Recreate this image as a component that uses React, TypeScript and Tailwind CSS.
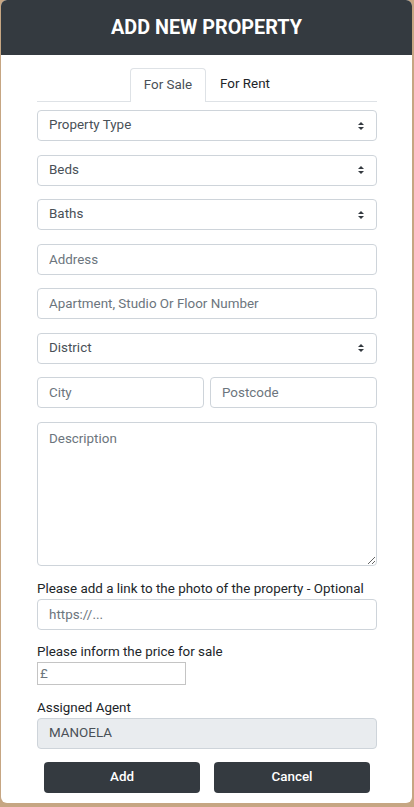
const Caret = () => (
  <svg width="8" height="10" viewBox="0 0 8 10" className="text-[#343a40]">
    <path d="M4 1 L7 4 H1 Z" fill="currentColor" />
    <path d="M4 9 L7 6 H1 Z" fill="currentColor" />
  </svg>
);

const SelectBox = ({ label }: { label: string }) => (
  <div className="flex items-center justify-between h-[31px] px-[11px] border border-[#ced4da] rounded-[4px] bg-white text-[13.4px] text-[#495057]">
    <span>{label}</span>
    <Caret />
  </div>
);

const TextBox = ({ placeholder }: { placeholder: string }) => (
  <input
    placeholder={placeholder}
    className="h-[31px] w-full px-[11px] border border-[#ced4da] rounded-[4px] bg-white text-[13.4px] text-[#495057] placeholder:text-[#6c757d] outline-none"
  />
);

export default function App() {
  return (
    <div
      className="w-[414px] h-[807px] bg-[#c6a683] pl-[1px] pr-[2px] pb-[4px]"
      style={{ fontFamily: "Roboto, 'Liberation Sans', sans-serif" }}
    >
      <div className="h-full bg-white rounded-[6px] overflow-hidden flex flex-col">
        <div className="h-[55px] shrink-0 bg-[#343a40] flex items-center justify-center">
          <h1 className="text-white font-bold text-[19.8px]">ADD NEW PROPERTY</h1>
        </div>

        <div className="pl-[36px] pr-[35px] pt-[13px] flex flex-col">
          {/* tabs */}
          <div className="flex justify-center border-b border-[#dee2e6] text-[13.4px] text-[#212529]">
            <div className="w-[76px] h-[34px] flex items-center justify-center border border-b-0 border-[#dee2e6] rounded-t-[4px] -mb-[1px] bg-white text-[#495057]">
              For Sale
            </div>
            <div className="w-[78px] h-[33px] flex items-center justify-center">For Rent</div>
          </div>

          <div className="flex flex-col gap-[13.5px] mt-[8px]">
            <SelectBox label="Property Type" />
            <SelectBox label="Beds" />
            <SelectBox label="Baths" />
            <TextBox placeholder="Address" />
            <TextBox placeholder="Apartment, Studio Or Floor Number" />
            <SelectBox label="District" />
            <div className="flex gap-[6px]">
              <TextBox placeholder="City" />
              <TextBox placeholder="Postcode" />
            </div>
            <textarea
              placeholder="Description"
              className="h-[144px] w-full px-[11px] py-[6px] border border-[#ced4da] rounded-[4px] text-[13.4px] text-[#495057] placeholder:text-[#6c757d] outline-none resize-y"
            />
          </div>

          <label className="mt-[13px] leading-[20px] text-[13.4px] text-[#212529]">
            Please add a link to the photo of the property - Optional
          </label>
          <TextBox placeholder="https://..." />

          <label className="mt-[12px] leading-[20px] text-[13.4px] text-[#212529]">
            Please inform the price for sale
          </label>
          <input
            placeholder="£"
            className="w-[149px] h-[23px] px-[2px] border border-[#c4c4c4] text-[13.4px] text-[#212529] placeholder:text-[#6c757d] outline-none"
          />

          <label className="mt-[13px] leading-[20px] text-[13.4px] text-[#212529]">Assigned Agent</label>
          <div className="h-[31px] flex items-center px-[11px] bg-[#e9ecef] border border-[#ced4da] rounded-[4px] text-[13.4px] text-[#495057]">
            MANOELA
          </div>

          <div className="flex justify-between px-[7px] mt-[13px]">
            <button className="w-[156px] h-[31px] bg-[#343a40] rounded-[4px] text-white text-[13.4px] font-medium">
              Add
            </button>
            <button className="w-[156px] h-[31px] bg-[#343a40] rounded-[4px] text-white text-[13.4px] font-medium">
              Cancel
            </button>
          </div>
        </div>
      </div>
    </div>
  );
}
